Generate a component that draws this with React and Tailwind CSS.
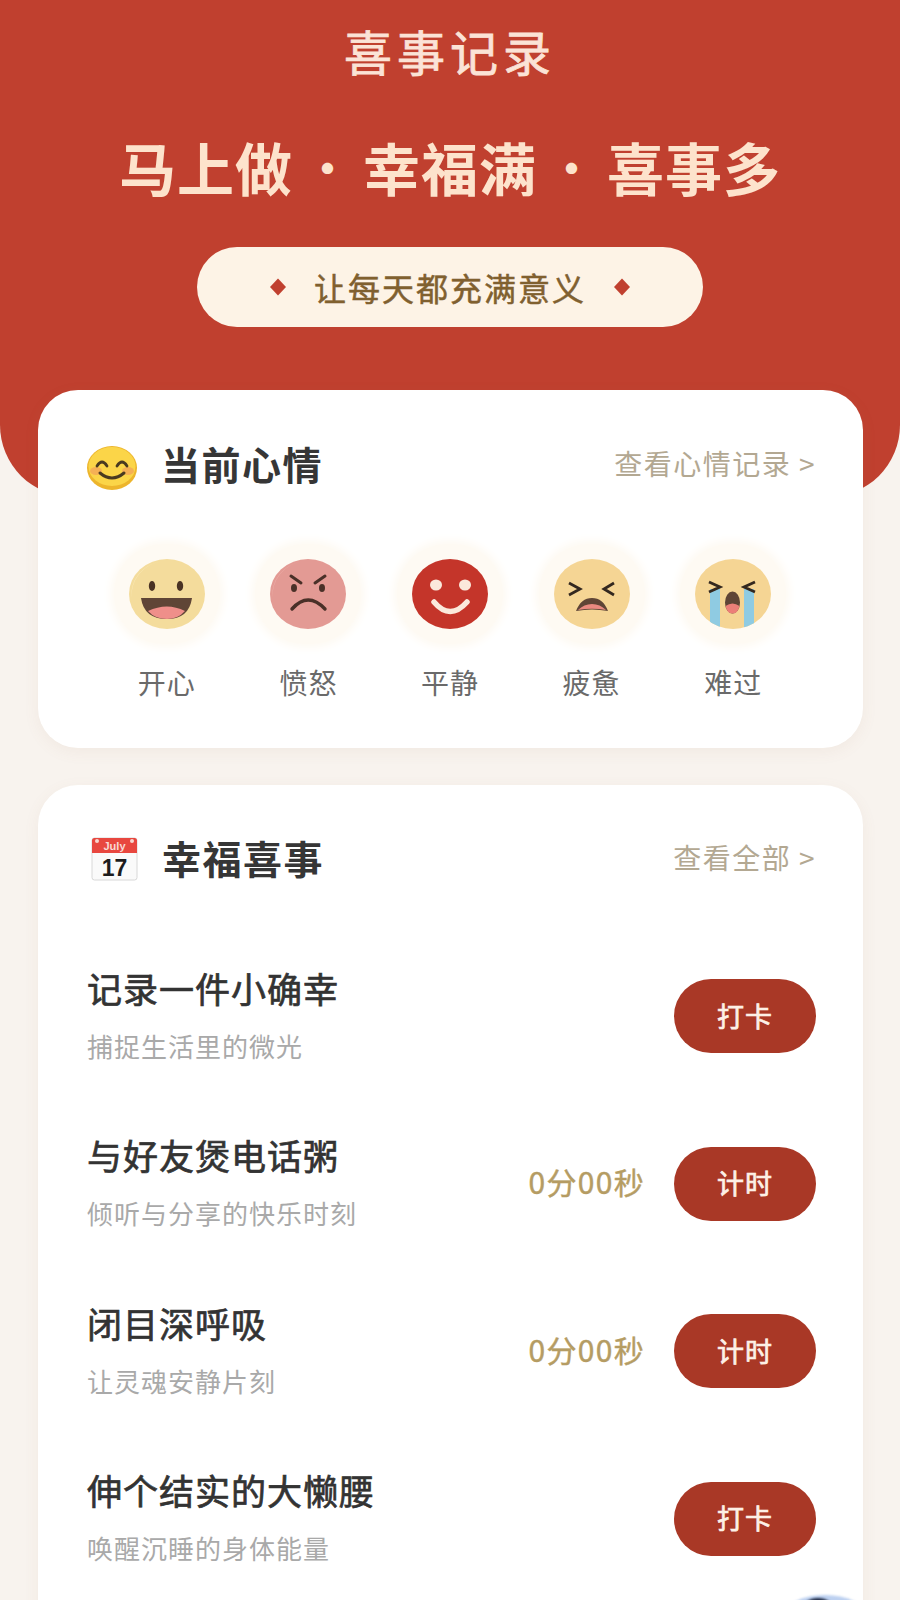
import React from "react";

const FONT = "font-['Noto_Sans_CJK_SC','Noto_Sans',sans-serif]";

function Diamond() {
  return (
    <svg width="18" height="20" viewBox="0 0 18 20" className="shrink-0">
      <path d="M9 1.5 L17 10 L9 18.5 L1 10 Z" fill="#c0402f" />
    </svg>
  );
}

function SmileEmoji() {
  return (
    <svg width="50" height="44" viewBox="0 0 50 44" className="shrink-0">
      <ellipse cx="25" cy="22" rx="25" ry="22" fill="#edb52c" />
      <ellipse cx="25" cy="20.5" rx="23.5" ry="19.5" fill="#fbd548" />
      <ellipse cx="9" cy="25" rx="6" ry="4" fill="#f3a35a" opacity="0.75" />
      <ellipse cx="41" cy="25" rx="6" ry="4" fill="#f3a35a" opacity="0.75" />
      <path d="M10 20 Q15 12 20 20 M30 20 Q35 12 40 20" fill="none" stroke="#4a3a20" strokeWidth="2.8" strokeLinecap="round" />
      <path d="M13 27 Q25 37 37 27" fill="none" stroke="#4a3a20" strokeWidth="3" strokeLinecap="round" />
    </svg>
  );
}

function CalendarEmoji() {
  return (
    <svg width="48" height="44" viewBox="0 0 48 44" className="shrink-0">
      <rect x="1" y="1" width="45" height="42" rx="2.5" fill="#fafafa" stroke="#d8d8d8" />
      <path d="M1 16 V3.5 A2.5 2.5 0 0 1 3.5 1 H43.5 A2.5 2.5 0 0 1 46 3.5 V16 Z" fill="#e8473f" />
      <circle cx="6" cy="4" r="2" fill="#f6d7d0" />
      <circle cx="41" cy="4" r="2" fill="#f6d7d0" />
      <text x="23.5" y="13" textAnchor="middle" fontSize="11" fontWeight="700" fill="#f9d9d4" fontFamily="Liberation Sans, sans-serif">July</text>
      <text x="23.5" y="39" textAnchor="middle" fontSize="23" fontWeight="700" fill="#1c1c1c" fontFamily="Liberation Sans, sans-serif">17</text>
    </svg>
  );
}

function Happy() {
  return (
    <svg width="76" height="70" viewBox="0 0 76 70">
      <ellipse cx="38" cy="35" rx="38" ry="35" fill="#f4dc9c" />
      <path d="M3 40 A36 33 0 0 1 34 2 A36 34 0 0 0 3 40" fill="#fbeab9" />
      <ellipse cx="23" cy="27" rx="3.2" ry="5" fill="#4a3324" />
      <ellipse cx="51" cy="27" rx="3.2" ry="5" fill="#4a3324" />
      <path d="M12 39 H63 Q60 60 38 60 Q15 60 12 39 Z" fill="#5f4536" />
      <path d="M19 52 Q38 43 56 52 Q49 60 38 60 Q26 60 19 52 Z" fill="#ef8f8a" />
    </svg>
  );
}

function Angry() {
  return (
    <svg width="76" height="70" viewBox="0 0 76 70">
      <ellipse cx="38" cy="35" rx="38" ry="35" fill="#e39a94" />
      <path d="M3 40 A36 33 0 0 1 34 2 A36 34 0 0 0 3 40" fill="#eeb0aa" />
      <path d="M21 17 L31 24 M55 17 L45 24" stroke="#4a3028" strokeWidth="3" strokeLinecap="round" />
      <ellipse cx="24" cy="29" rx="3" ry="4" fill="#4a3028" />
      <ellipse cx="52" cy="29" rx="3" ry="4" fill="#4a3028" />
      <path d="M22 50 Q38 32 55 50" fill="none" stroke="#4a3028" strokeWidth="3.4" strokeLinecap="round" />
    </svg>
  );
}

function Calm() {
  return (
    <svg width="76" height="70" viewBox="0 0 76 70">
      <ellipse cx="38" cy="35" rx="38" ry="35" fill="#c4352a" />
      <ellipse cx="24" cy="26" rx="6" ry="5.5" fill="#fbe9dc" />
      <ellipse cx="53" cy="26" rx="6" ry="5.5" fill="#fbe9dc" />
      <path d="M22 43 Q38 62 55 43" fill="none" stroke="#fbe9dc" strokeWidth="5.5" strokeLinecap="round" />
    </svg>
  );
}

function Tired() {
  return (
    <svg width="76" height="70" viewBox="0 0 76 70">
      <ellipse cx="38" cy="35" rx="38" ry="35" fill="#f5d594" />
      <path d="M15 24 L26 30 L15 36 M60 24 L50 30 L60 36" fill="none" stroke="#33281f" strokeWidth="2.8" />
      <path d="M22 52 Q27 39 38 39 Q49 39 54 52 Q38 49 22 52 Z" fill="#5f4536" />
      <path d="M24 51 Q30 45 38 45 Q46 45 52 51 Q38 48.5 24 51 Z" fill="#e98a80" />
    </svg>
  );
}

function Sad() {
  return (
    <svg width="76" height="70" viewBox="0 0 76 70">
      <defs>
        <clipPath id="sadclip"><ellipse cx="38" cy="35" rx="38" ry="35" /></clipPath>
      </defs>
      <ellipse cx="38" cy="35" rx="38" ry="35" fill="#f5d594" />
      <g clipPath="url(#sadclip)">
        <rect x="15" y="30" width="10" height="40" fill="#8fcbe2" />
        <rect x="49" y="30" width="10" height="40" fill="#8fcbe2" />
      </g>
      <path d="M14 23 L25 28 L14 33 M60 23 L49 28 L60 33" fill="none" stroke="#33281f" strokeWidth="2.8" />
      <ellipse cx="37.5" cy="43.5" rx="7.5" ry="11" fill="#5f4536" />
      <path d="M30.5 47 Q37.5 42 44.5 47 Q43 54.5 37.5 54.5 Q32 54.5 30.5 47 Z" fill="#ec7f78" />
    </svg>
  );
}

const moods = [
  { label: "开心", Face: Happy },
  { label: "愤怒", Face: Angry },
  { label: "平静", Face: Calm },
  { label: "疲惫", Face: Tired },
  { label: "难过", Face: Sad },
];

const tasks = [
  { title: "记录一件小确幸", sub: "捕捉生活里的微光", action: "打卡" },
  { title: "与好友煲电话粥", sub: "倾听与分享的快乐时刻", action: "计时", time: "0分00秒" },
  { title: "闭目深呼吸", sub: "让灵魂安静片刻", action: "计时", time: "0分00秒" },
  { title: "伸个结实的大懒腰", sub: "唤醒沉睡的身体能量", action: "打卡" },
];

function CardHeader({ icon, title, link, gap }) {
  return (
    <div className="flex items-center justify-between">
      <div className={`flex items-center h-[48px] ${gap}`}>
        {icon}
        <h2 className="text-[39px] leading-[48px] font-bold text-[#363636] tracking-[1.5px]">{title}</h2>
      </div>
      <span className="text-[28px] leading-[40px] text-[#b3a892] tracking-[1.5px]">{link}</span>
    </div>
  );
}

export default function App() {
  return (
    <div className={`${FONT} relative w-[900px] h-[1600px] overflow-hidden bg-[#f8f3ee]`}>
      <header className="h-[497px] bg-[#c0402f] rounded-b-[72px] flex flex-col items-center">
        <h1 className="mt-[19px] text-[48px] leading-[62px] text-[#fbe3d6] tracking-[5px] [-webkit-text-stroke:0.8px_#fbe3d6]">喜事记录</h1>
        <p className="mt-[45px] flex items-center text-[57px] leading-[80px] font-bold text-[#fde3cc] tracking-[1px]">
          <span>马上做</span>
          <span className="w-[70px] text-center text-[44px]">·</span>
          <span>幸福满</span>
          <span className="w-[70px] text-center text-[44px]">·</span>
          <span>喜事多</span>
        </p>
        <div className="mt-[41px] w-[506px] h-[80px] rounded-full bg-[#fdf3e6] flex items-center justify-center gap-[27px]">
          <Diamond />
          <span className="text-[32px] leading-[40px] text-[#80602f] tracking-[2px] [-webkit-text-stroke:0.5px_#80602f]">让每天都充满意义</span>
          <Diamond />
        </div>
      </header>

      <main className="relative -mt-[107px] ml-[38px] mr-[37px] flex flex-col gap-[37px]">
        <section className="h-[358px] bg-white rounded-[40px] pl-[49px] pr-[47px] pt-[49px] shadow-[0_4px_16px_rgba(150,110,80,0.07)]">
          <CardHeader icon={<span className="flex pt-[10px]"><SmileEmoji /></span>} title="当前心情" link="查看心情记录 >" gap="gap-[24px]" />
          <div className="mt-[57px] ml-[9px] w-[708px] grid grid-cols-5">
            {moods.map(({ label, Face }) => (
              <div key={label} className="flex flex-col items-center">
                <div className="w-[106px] h-[100px] rounded-full bg-[#fefaf3] shadow-[0_0_8px_4px_#fefaf3] flex items-center justify-center">
                  <Face />
                </div>
                <span className="mt-[18px] text-[28px] leading-[40px] text-[#6a6a6a] tracking-[1px]">{label}</span>
              </div>
            ))}
          </div>
        </section>

        <section className="h-[900px] bg-white rounded-t-[40px] pl-[49px] pr-[47px] pt-[48px] shadow-[0_4px_16px_rgba(150,110,80,0.07)]">
          <CardHeader icon={<span className="ml-[4px] flex pt-[4px]"><CalendarEmoji /></span>} title="幸福喜事" link="查看全部 >" gap="gap-[23px]" />
          <div className="mt-[63px] flex flex-col gap-[23.5px]">
            {tasks.map((t) => (
              <div key={t.title} className="h-[144px] flex items-center justify-between">
                <div className="flex flex-col mb-[3px]">
                  <span className="text-[35px] leading-[44px] text-[#333333] tracking-[1px] [-webkit-text-stroke:0.7px_#333333]">{t.title}</span>
                  <span className="mt-[18px] text-[26px] leading-[36px] text-[#a9a9a9] tracking-[1px]">{t.sub}</span>
                </div>
                <div className="flex items-center gap-[29px]">
                  {t.time && <span className="mb-[5px] text-[30px] leading-[40px] text-[#b59c63] tracking-[1.3px] [-webkit-text-stroke:0.4px_#b59c63]">{t.time}</span>}
                  <button className="w-[142px] h-[74px] rounded-full bg-[#a93826] text-[#fdf0e6] text-[27px] tracking-[1px] [-webkit-text-stroke:0.7px_#fdf0e6]">{t.action}</button>
                </div>
              </div>
            ))}
          </div>
        </section>
      </main>

      <div className="absolute left-[785px] top-[1595px] w-[80px] h-[40px] rounded-[50%] bg-[#bcd0f0] blur-[1px] flex items-start justify-center">
        <div className="mt-[3px] -ml-[14px] w-[30px] h-[20px] rounded-[50%] bg-[#1f2a44]" />
      </div>
    </div>
  );
}
